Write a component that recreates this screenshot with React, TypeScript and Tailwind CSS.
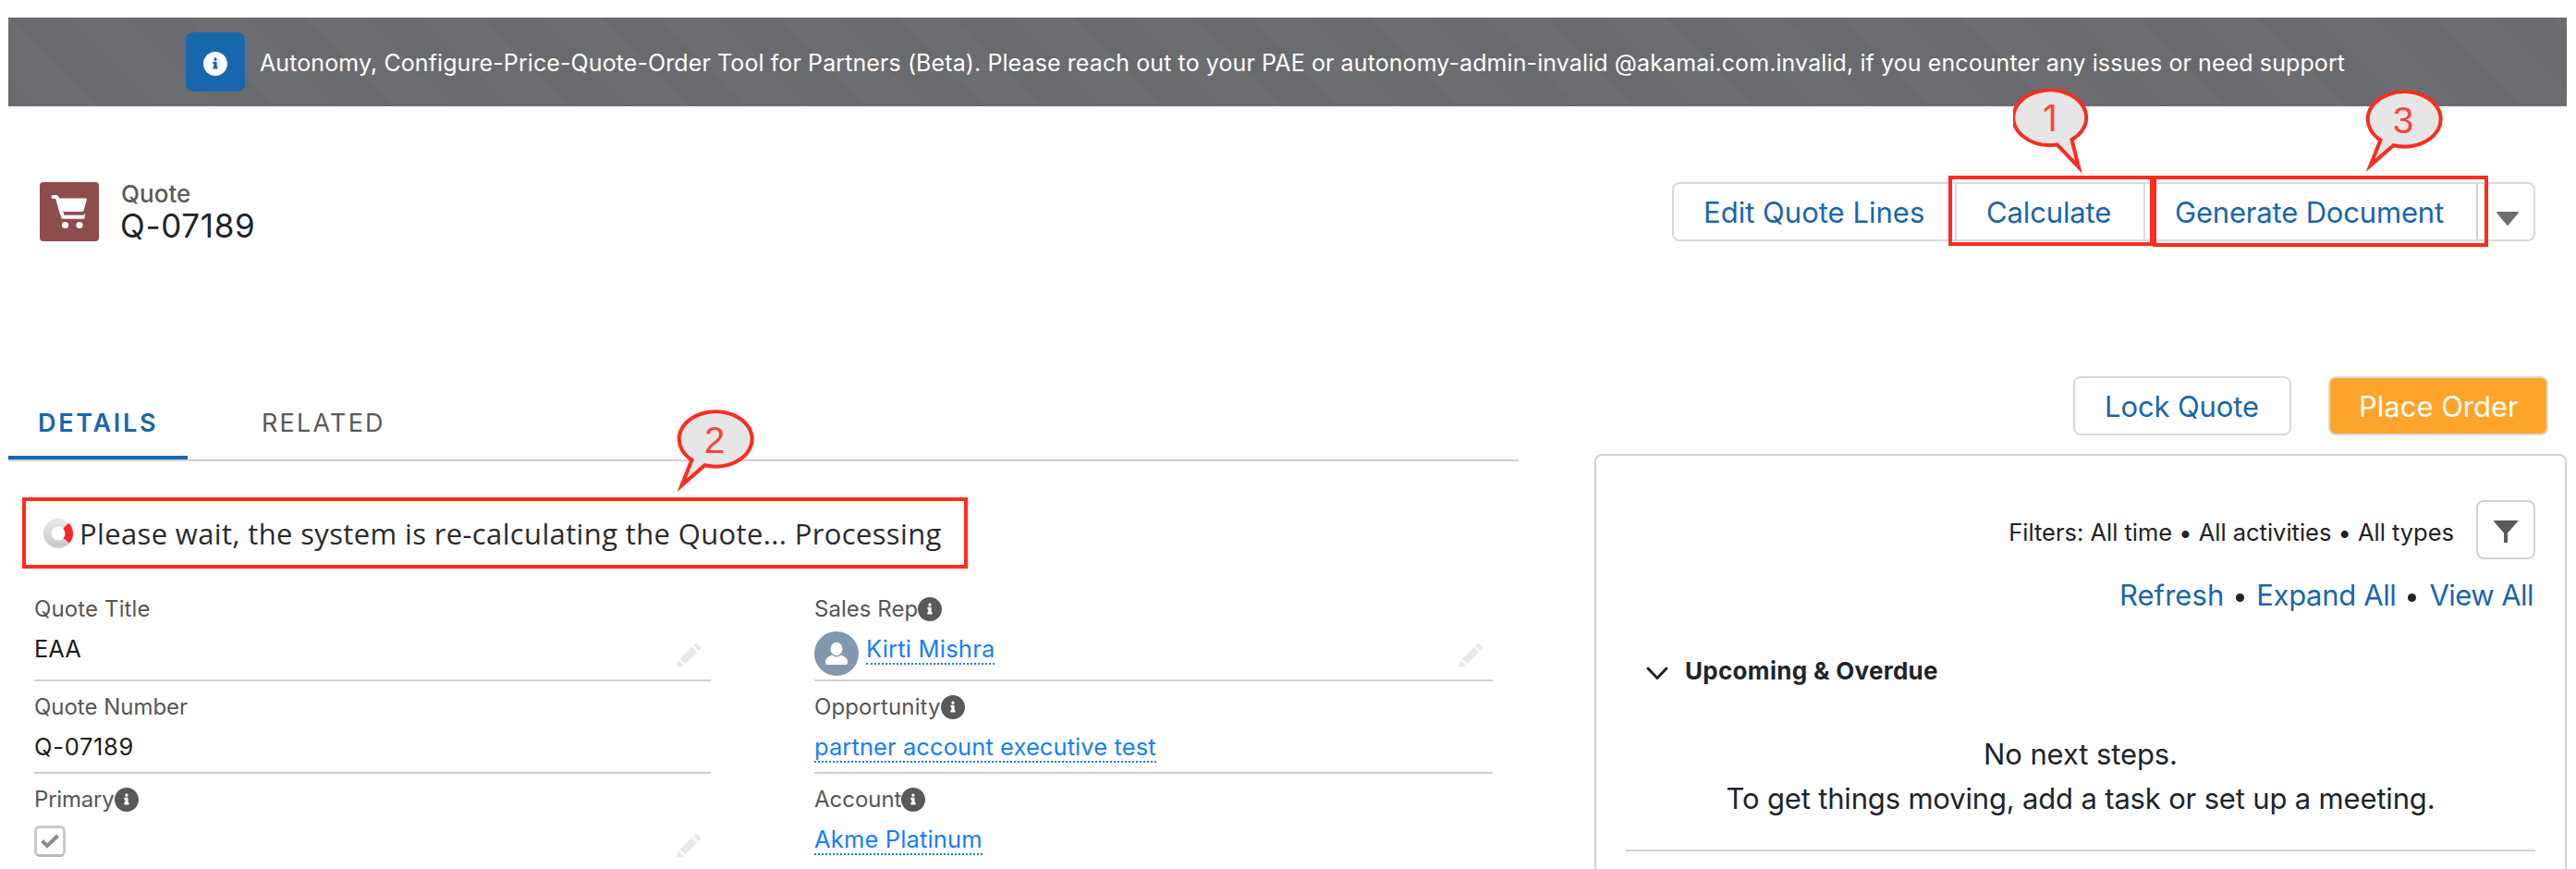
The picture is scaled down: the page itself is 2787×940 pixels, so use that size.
import React from "react";

function InfoGlyph({ className }: { className: string }) {
  return (
    <svg viewBox="0 0 48 48" className={className} fill="currentColor">
      <path
        transform="translate(-2 -2)"
        d="M26 2C12.7 2 2 12.7 2 26s10.7 24 24 24 24-10.7 24-24S39.3 2 26 2zm0 12.1c1.7 0 3 1.3 3 3s-1.3 3-3 3-3-1.3-3-3 1.3-3 3-3zm5 21c0 .5-.4.9-1 .9h-8c-.5 0-1-.3-1-.9v-2c0-.5.4-1.1 1-1.1.5 0 1-.3 1-.9v-4c0-.5-.4-1.1-1-1.1-.5 0-1-.3-1-.9v-2c0-.5.4-1.1 1-1.1h6c.5 0 1 .5 1 1.1v8c0 .5.4.9 1 .9.5 0 1 .5 1 1.1v2z"
      />
    </svg>
  );
}

function Pencil() {
  return (
    <svg viewBox="2 2 48 48" className="mt-[14px] mr-[11px] h-[26px] w-[26px] shrink-0" fill="#e8e9ea">
      <path d="M9.5 33.4l8.9 8.9c.4.4 1 .4 1.4 0L42 20c.4-.4.4-1 0-1.4l-8.8-8.8c-.4-.4-1-.4-1.4 0L9.5 32.1c-.4.4-.4 1 0 1.3zM36.1 5.7c-.4.4-.4 1 0 1.4l8.8 8.8c.4.4 1 .4 1.4 0l2.5-2.5c1.6-1.5 1.6-3.9 0-5.5l-4.7-4.7c-1.6-1.6-4.1-1.6-5.7 0l-2.3 2.5zM2.1 48.2c-.2 1 .7 1.9 1.7 1.7l10.9-2.6c.4-.1.7-.3.9-.5l.2-.2c.2-.2.3-.9-.1-1.3l-9-9c-.4-.4-1.1-.3-1.3-.1l-.2.2c-.3.3-.4.6-.5.9L2.1 48.2z" />
    </svg>
  );
}

function Field({
  label,
  labelClass,
  info,
  editable,
  className,
  children,
}: {
  label: string;
  labelClass: string;
  info?: boolean;
  editable?: boolean;
  className: string;
  children: React.ReactNode;
}) {
  return (
    <div className={`border-b-2 border-[#d1d1d1] pt-[10px] ${className}`}>
      <div className="flex h-[35px] items-center text-[24px] leading-[35px] text-[#565656]">
        <span className={labelClass}>{label}</span>
        {info && <InfoGlyph className="h-[26px] w-[26px] text-[#595959]" />}
      </div>
      <div className="flex h-[52px] items-start justify-between text-[25.5px] leading-[52px] text-[#1c1c1c]">
        <div className="flex">{children}</div>
        {editable && (
          <div className="pt-[6px]">
            <Pencil />
          </div>
        )}
      </div>
    </div>
  );
}

function FieldLink({ className, children }: { className: string; children: string }) {
  return (
    <div className="pt-[6px]">
      <a className={`block h-[37px] border-b-2 border-dotted border-[#157efb] leading-[40px] text-[#157efb] ${className}`}>{children}</a>
    </div>
  );
}

function Callout({ n, d, className, textClass }: { n: string; d: string; className: string; textClass: string }) {
  return (
    <div className={`absolute h-[100px] w-[90px] ${className}`}>
      <svg viewBox="0 0 90 100" className="absolute inset-0 h-full w-full">
        <path d={d} fill="#e6e6e6" stroke="#ff2b1c" strokeWidth="4" strokeMiterlimit="10" />
      </svg>
      <span className={`absolute w-[84px] text-center leading-[46px] text-[#ff403a] ${textClass}`}>{n}</span>
    </div>
  );
}

const tailLeft = "M16.5 54.5 A39.5 29.7 0 1 1 30.5 60.3 L5.5 82 Z";
const tailRight = "M63.5 55 A39.5 29.7 0 1 0 47.5 60.4 L71 85 Z";

export default function App() {
  return (
    <div className="relative h-[940px] w-[2787px] overflow-hidden bg-white pl-[9px] pt-[19px] font-['Inter',sans-serif] whitespace-nowrap text-[#20242a]">
      {/* notice banner */}
      <div className="flex h-[96px] w-[2768px] items-center bg-[#6c6d71] bg-[linear-gradient(45deg,rgba(0,0,0,0.03)_25%,transparent_25%,transparent_50%,rgba(0,0,0,0.03)_50%,rgba(0,0,0,0.03)_75%,transparent_75%)] bg-[length:128px_128px] pl-[192px]">
        <div className="flex h-[64px] w-[64px] items-center justify-center rounded-[8px] bg-[#1866ad]">
          <InfoGlyph className="mt-[4px] h-[26px] w-[26px] text-white" />
        </div>
        <p className="ml-[16px] pt-[3px] text-[25px] tracking-[0.094px] text-white">
          Autonomy, Configure-Price-Quote-Order Tool for Partners (Beta). Please reach out to your PAE or autonomy-admin-invalid @akamai.com.invalid, if you encounter any issues or need support
        </p>
      </div>

      {/* record header */}
      <header className="mt-[82px] flex h-[64px] w-[2734px] justify-between pl-[34px]">
        <div className="flex">
          <div className="h-[64px] w-[64px] rounded-[4px] bg-[#8e4c4d]">
            <svg viewBox="0 0 64 64" className="h-full w-full" fill="none">
              <path d="M14.5 16h2.6c1 0 1.7.5 2 1.5l4.7 16.5c.3 1.100 1 1.800 2.200 1.800H47" stroke="#fff" strokeWidth="4" strokeLinecap="round" />
              <path d="M18.500 17.500h31.200c.9 0 1.500.8 1.200 1.700l-3.300 11.300c-.2.900-1 1.400-1.900 1.400H26" fill="#fff" />
              <path d="M20 19l5.500 19.200" stroke="#fff" strokeWidth="3" />
              <path d="M26 34.200h22" stroke="#8e4c4d" strokeWidth="3" />
              <path d="M25 38h22" stroke="#fff" strokeWidth="3.600" strokeLinecap="round" />
              <circle cx="27.500" cy="46.500" r="3.600" fill="#fff" />
              <circle cx="43" cy="46.500" r="3.600" fill="#fff" />
            </svg>
          </div>
          <div className="ml-[24px]">
            <div className="text-[26px] leading-[25px] font-medium tracking-[0.02px] text-[#5a5a5a]">Quote</div>
            <div className="-ml-px text-[35px] leading-[44px] tracking-[0.67px]">Q-07189</div>
          </div>
        </div>
        <div className="flex h-[64px] rounded-[8px] border-2 border-[#d8dbdc] text-[31px] leading-[61px] text-[#1866ad]">
          <div className="w-[304px] pl-[32px] tracking-[0.02px]">Edit Quote Lines</div>
          <div className="w-[204px] border-l-2 border-[#d8dbdc] pl-[32px] tracking-[-0.13px]">Calculate</div>
          <div className="w-[360px] border-l-2 border-[#d8dbdc] pl-[32px] tracking-[-0.18px]">Generate Document</div>
          <div className="w-[62px] border-l-2 border-[#cfcfcf] pt-[30px] pl-[20px]">
            <svg viewBox="0 0 24 15" className="h-[15px] w-[24px]" fill="#6c6e71">
              <path d="M1 0h22c.9 0 1.200.8.600 1.500L12.800 14.500c-.4.600-1.200.6-1.600 0L.4 1.500C-.2.800.1 0 1 0z" />
            </svg>
          </div>
        </div>
      </header>

      <main className="mt-[146px] flex">
        {/* record detail */}
        <section className="w-[1634px] pt-[28px]">
          <nav className="flex h-[64px] border-b-2 border-[#d1d1d1] text-[27px] leading-[45px]">
            <div className="w-[194px] border-b-4 border-[#1866ad] pl-[32px] font-semibold tracking-[2.7px] text-[#1866ad]">DETAILS</div>
            <div className="pl-[80px] tracking-[2.2px] text-[#5a5a5a]">RELATED</div>
          </nav>

          <div className="mt-[39px] ml-[15px] flex h-[77px] w-[1023px] items-center border-4 border-[#ff2b1c] pl-[19px]">
            <svg viewBox="0 0 32 32" className="h-[32px] w-[32px]" fill="none">
              <defs>
                <linearGradient id="ring" x1="0" y1="0" x2="0" y2="1">
                  <stop offset="0" stopColor="#e6e6e6" />
                  <stop offset="1" stopColor="#cbcbcb" />
                </linearGradient>
              </defs>
              <circle cx="16" cy="16" r="11.700" stroke="url(#ring)" strokeWidth="8.600" />
              <path d="M24.300 7.700A11.700 11.700 0 0 1 24.800 23.800" stroke="#ff2424" strokeWidth="8.400" />
            </svg>
            <span className="ml-[7px] pt-[1px] font-['Open_Sans',sans-serif] text-[31px] leading-[44px] tracking-[0.36px] text-[#2b2b2b]">
              Please wait, the system is re-calculating the Quote... Processing
            </span>
          </div>

          <div className="mt-[16px] ml-[28px] flex gap-[112px]">
            <div className="w-[732px]">
              <Field label="Quote Title" labelClass="tracking-[0.12px]" editable className="h-[106px]">
                <span>EAA</span>
              </Field>
              <Field label="Quote Number" labelClass="tracking-[-0.02px]" className="h-[100px]">
                <span className="tracking-[0.7px]">Q-07189</span>
              </Field>
              <Field label="Primary" labelClass="tracking-[-0.2px]" info editable className="h-[110px]">
                <div className="mt-[11px] flex h-[34px] w-[34px] items-center justify-center rounded-[6px] border-[3px] border-[#c9c9c9] border-b-[#b9b9b9] bg-white">
                  <svg viewBox="0 0 22 18" className="h-[18px] w-[22px]" fill="none" stroke="#8c8c8c" strokeWidth="4">
                    <path d="M2.500 8.500l5.500 5.500L19.500 3" />
                  </svg>
                </div>
              </Field>
            </div>
            <div className="w-[734px]">
              <Field label="Sales Rep" labelClass="tracking-[0.03px]" info editable className="h-[106px]">
                <svg viewBox="0 0 48 48" className="mt-[7px] mr-[8px] h-[48px] w-[48px]">
                  <circle cx="24" cy="24" r="24" fill="#8199af" />
                  <ellipse cx="24" cy="19" rx="6.400" ry="7.200" fill="#fff" />
                  <path d="M12 33c0-4.200 3.300-5.800 7.300-7.400 1.200 1.200 2.900 1.900 4.700 1.900s3.500-.7 4.700-1.900c4 1.600 7.300 3.200 7.300 7.400v.8c0 1.500-1 2.300-2.300 2.300H14.300c-1.300 0-2.300-.8-2.300-2.300z" fill="#fff" />
                </svg>
                <FieldLink className="tracking-[0.2px]">Kirti Mishra</FieldLink>
              </Field>
              <Field label="Opportunity" labelClass="tracking-[0.11px]" info className="h-[100px]">
                <FieldLink className="tracking-[0.09px]">partner account executive test</FieldLink>
              </Field>
              <Field label="Account" labelClass="tracking-[-0.02px]" info className="h-[110px]">
                <FieldLink className="tracking-[0.15px]">Akme Platinum</FieldLink>
              </Field>
            </div>
          </div>
        </section>

        {/* activity column */}
        <aside className="ml-[82px] w-[1052px]">
          <div className="flex h-[84px] justify-end gap-[40px] pr-[20px] text-[31px] leading-[61px]">
            <div className="h-[64px] w-[236px] rounded-[8px] border-2 border-[#d8dbdc] pl-[32px] tracking-[-0.11px] text-[#1866ad]">Lock Quote</div>
            <div className="h-[64px] w-[238px] rounded-[8px] border-2 border-[#d8dbde] bg-[#ffa42b] pl-[31px] tracking-[-0.01px] text-white">Place Order</div>
          </div>
          <div className="h-[480px] rounded-t-[8px] border-2 border-[#d1d1d1] px-[32px] pt-[48px]">
            <div className="flex items-center justify-end text-[25.5px] text-[#222]">
              <span className="pt-[6px] tracking-[-0.02px]">Filters: All time • All activities • All types</span>
              <span className="ml-[24px] flex h-[64px] w-[64px] items-center justify-center rounded-[8px] border-2 border-[#d1d1d1]">
                <svg viewBox="0 0 26 24" className="mt-[4px] h-[24px] w-[26px]" fill="#595959">
                  <path d="M.8 0h24.400c.8 0 1 .6.600 1.200L15 13.500v10c0 .3-.2.500-.5.500h-3c-.3 0-.5-.2-.5-.5v-10L.2 1.200C-.2.600 0 0 .8 0z" />
                </svg>
              </span>
            </div>
            <div className="mt-[16px] flex h-[46px] items-center justify-end pr-[2px] text-[31px] leading-[46px] text-[#1866ad]">
              <span className="tracking-[0.06px]">Refresh</span>
              <i className="mt-[4px] ml-[13px] h-[9px] w-[9px] rounded-full bg-[#20242a]" />
              <span className="ml-[13px] tracking-[-0.35px]">Expand All</span>
              <i className="mt-[4px] ml-[13px] h-[9px] w-[9px] rounded-full bg-[#20242a]" />
              <span className="ml-[14px] tracking-[-0.55px]">View All</span>
            </div>
            <div className="mt-[39px] flex h-[40px] items-center pl-[22px]">
              <svg viewBox="0 0 24 15" className="mt-[5px] h-[15px] w-[24px]" fill="none" stroke="#20242a" strokeWidth="3" strokeLinecap="round" strokeLinejoin="round">
                <path d="M2 2l10 10.500L22 2" />
              </svg>
              <span className="ml-[18px] text-[26px] leading-[40px] font-bold tracking-[0.3px]">Upcoming &amp; Overdue</span>
            </div>
            <div className="mt-[46px] h-[129px] border-b-2 border-[#d1d1d1] text-center text-[31px] leading-[48px]">
              <p className="tracking-[-0.1px]">No next steps.</p>
              <p className="tracking-[-0.17px]">To get things moving, add a task or set up a meeting.</p>
            </div>
          </div>
        </aside>
      </main>

      {/* step annotations */}
      <div className="absolute top-[190px] left-[2108px] h-[76px] w-[222px] border-4 border-[#ff2b1c]" />
      <div className="absolute top-[190px] left-[2329px] h-[77px] w-[363px] border-4 border-[#ff2b1c]" />
      <Callout n="1" d={tailRight} className="top-[96px] left-[2178px]" textClass="top-[9px] left-[-2px] text-[39px]" />
      <Callout n="2" d={tailLeft} className="top-[443px] left-[732px]" textClass="top-[10px] left-[-1px] font-['Liberation_Sans',sans-serif] text-[40px]" />
      <Callout n="3" d={tailLeft} className="top-[97px] left-[2559px]" textClass="top-[10px] left-[-1px] font-['Liberation_Sans',sans-serif] text-[40px]" />
    </div>
  );
}
